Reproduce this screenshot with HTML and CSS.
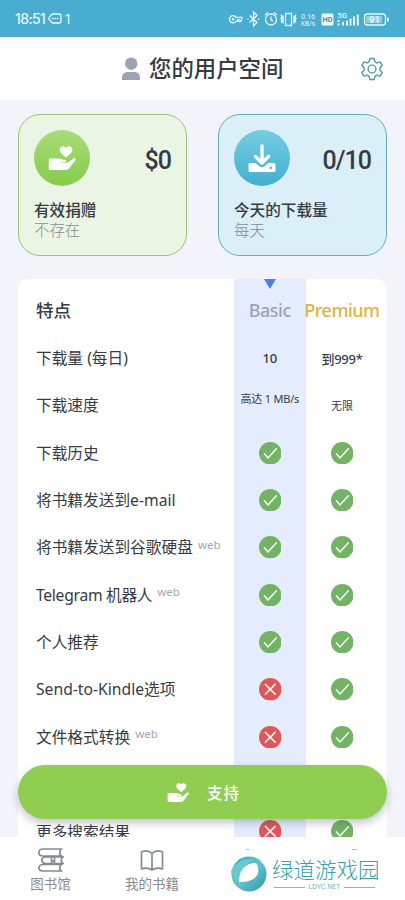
FILE: index.html
```html
<!DOCTYPE html>
<html lang="zh-CN">
<head>
<meta charset="utf-8">
<meta name="viewport" content="width=device-width, initial-scale=1">
<title>您的用户空间</title>
<link rel="stylesheet" href="styles.css">
</head>
<body>
<svg class="defs" width="0" height="0" aria-hidden="true">
  <symbol id="yes" viewBox="0 0 22 22"><circle cx="11" cy="11" r="11" fill="#74b266"/><path d="M5.3 11.6l3.5 4L17 6.7" fill="none" stroke="#f1fff0" stroke-width="1.5" stroke-linecap="round" stroke-linejoin="round"/></symbol>
  <symbol id="no" viewBox="0 0 22 22"><circle cx="11" cy="11" r="11" fill="#dc5859"/><path d="M6.2 6.2l9.600 9.600M15.800 6.200l-9.600 9.600" fill="none" stroke="#fff0f0" stroke-width="1.5" stroke-linecap="round"/></symbol>
  <symbol id="give" viewBox="0 0 28 26"><path d="M18 12.500C14 9.500 11.700 7.500 11.700 4.600C11.700 .8 16.200 0 18 3C19.800 0 24.500 .8 24.500 4.600C24.500 7.500 22 9.500 18 12.500Z"/><path d="M2 13.500H11c3 0 3.500 1.400 6 1.400 1.800 0 1.700 2.500-.2 2.500H12c3 1.300 7 1 9-.6l4.500-3.500c1.500-.9 2.900.5 1.900 1.900l-6 7.800c-1.100 1.400-2.200 2-4 2H2c-.8 0-1.200-.4-1.200-1.200v-9.100c0-.8.400-1.200 1.200-1.200z"/></symbol>
</svg>
<div class="screen">
  <div class="status">
    <span class="clock">18:51</span>
    <svg class="msg" width="14" height="11" viewBox="0 0 14 11"><path d="M4.500 1H11q2 0 2 2v5q0 2-2 2H4.500L1 6.500v-2z"/><path d="M4.500 5.500h.5M7 5.500h.5M9.500 5.500h.5" stroke-width="1.500"/></svg>
    <span class="count">1</span>
    <svg class="tray" width="166" height="20" viewBox="0 0 166 20">
      <g class="line">
        <path d="M8 8.300A3.600 3.600 0 1 0 8 12.300H9.500v-1.600h1.500v1.800h1.500q1.500-2 1.500-4.200z"/><circle cx="5" cy="10.300" r=".7"/>
        <path d="M21.500 6.500l7.500 7L25.500 17V3L29 6.500l-7.500 7M19.500 10h1M30 10h1"/>
        <circle cx="43" cy="10.500" r="5.500"/><path d="M43 7.500v3.500l2 1M37 6l3-2.500M49 6l-3-2.500"/>
        <path d="M57.500 4.500h6v12h-6zM55 6.500v8M66 6.500v8M53 5.500l1 2-1 2 1 2-1 2M68 5.500l-1 2 1 2-1 2 1 2"/>
        <rect x="136.500" y="5" width="21" height="11" rx="3"/><path d="M160 8.500v4" stroke-width="1.800"/>
      </g>
      <text x="73" y="9.500" font-size="7.500" textLength="14" lengthAdjust="spacingAndGlyphs">0.16</text><text x="73" y="16.500" font-size="7.500" textLength="14" lengthAdjust="spacingAndGlyphs">KB/s</text>
      <rect x="93.500" y="4.500" width="12" height="12" rx="1.500" fill="#e7f8ff"/><text x="94.500" y="13.300" font-size="7.500" font-weight="600" textLength="10" lengthAdjust="spacingAndGlyphs" class="dark">HD</text>
      <text x="109.500" y="9" font-size="7.500" font-weight="500" textLength="9.500">5G</text>
      <path d="M110.500 11v2M110.500 14.500v2M115 13v3.500M119 11.500v5M122.500 9.500v7M126 7.500v9M129.800 5.500v11" class="bars"/>
      <rect x="138" y="7" width="16" height="7" rx="1" fill="#8fd0e5"/><text x="141" y="14" font-size="9.500" font-weight="600">91</text>
    </svg>
  </div>

  <header class="header">
    <svg class="person" width="20" height="24" viewBox="0 0 20 24"><circle cx="10.200" cy="6.700" r="6.200"/><path d="M1 23v-2c0-4 2.300-6 6-6h6c3.700 0 6 2 6 6v2z"/></svg>
    <h1>您的用户空间</h1>
    <svg class="gear" width="24" height="24" viewBox="0 0 24 24"><circle cx="12" cy="12" r="3.900"/><path d="M9.900 1.500h4.200l.8 3.200 2 1.200 3.200-1 2.100 3.700-2.300 2.300v2.300l2.300 2.300-2.100 3.600-3.200-.9-2 1.200-.8 3.100H9.900l-.8-3.100-2-1.200-3.200.9-2.100-3.600 2.300-2.300v-2.300L1.800 8.600l2.100-3.700 3.200 1 2-1.200z"/></svg>
  </header>

  <main class="content">
    <section class="cards">
      <article class="card green">
        <div class="card-top"><span class="badge"><svg width="28" height="26"><use href="#give"/></svg></span><strong>$0</strong></div>
        <h2>有效捐赠</h2><p>不存在</p>
      </article>
      <article class="card blue">
        <div class="card-top"><span class="badge"><svg width="28" height="28" viewBox="0 0 28 28"><path d="M14 2v16M7.500 12.500l6.500 6.500 6.500-6.500" fill="none" stroke="#fff" stroke-width="3.400" stroke-linecap="round" stroke-linejoin="round"/><path fill-rule="evenodd" d="M2 19h5.500l4.200 3.500q2.300 1.500 4.600 0L20.500 19H26q1.500 0 1.500 1.500v6Q27.500 28 26 28H2Q.5 28 .5 26.500v-6Q.5 19 2 19zm20.700 3.500a1.300 1.300 0 1 0 .1 0z"/></svg></span><strong>0/10</strong></div>
        <h2>今天的下载量</h2><p>每天</p>
      </article>
    </section>

    <section class="table">
      <div class="row head"><span class="name">特点</span><span class="basic">Basic</span><span class="premium">Premium</span></div>
      <div class="row"><span class="name">下载量 (每日)</span><span class="basic num">10</span><span class="num">到999*</span></div>
      <div class="row"><span class="name">下载速度</span><span class="basic small speed">高达 1 MB/s</span><span class="small">无限</span></div>
      <div class="row"><span class="name">下载历史</span><span class="basic"><svg><use href="#yes"/></svg></span><span><svg><use href="#yes"/></svg></span></div>
      <div class="row"><span class="name">将书籍发送到e-mail</span><span class="basic"><svg><use href="#yes"/></svg></span><span><svg><use href="#yes"/></svg></span></div>
      <div class="row"><span class="name">将书籍发送到谷歌硬盘<small>web</small></span><span class="basic"><svg><use href="#yes"/></svg></span><span><svg><use href="#yes"/></svg></span></div>
      <div class="row"><span class="name"><span class="tight">Telegram 机器人</span><small>web</small></span><span class="basic"><svg><use href="#yes"/></svg></span><span><svg><use href="#yes"/></svg></span></div>
      <div class="row"><span class="name">个人推荐</span><span class="basic"><svg><use href="#yes"/></svg></span><span><svg><use href="#yes"/></svg></span></div>
      <div class="row"><span class="name">Send-to-Kindle选项</span><span class="basic"><svg><use href="#no"/></svg></span><span><svg><use href="#yes"/></svg></span></div>
      <div class="row"><span class="name">文件格式转换<small>web</small></span><span class="basic"><svg><use href="#no"/></svg></span><span><svg><use href="#yes"/></svg></span></div>
      <div class="row"><span class="name"></span><span class="basic"></span><span></span></div>
      <div class="row"><span class="name">更多搜索结果</span><span class="basic"><svg><use href="#no"/></svg></span><span><svg><use href="#yes"/></svg></span></div>
    </section>
  </main>

  <button class="support"><svg width="22" height="21" viewBox="0 0 28 26"><use href="#give"/></svg><span>支持</span></button>

  <nav class="nav">
    <a class="tab library"><svg width="28" height="26" viewBox="0 0 28 25"><path d="M25.500 1.500H6C.5 1.500.5 8.500 6 8.500h19.500M24 1.500q-2.500 3.500 0 7M27 9.500H9C3.500 9.500 3.500 16 9 16h18M25.500 9.500q-2.500 3.200 0 6.500M25.500 17H6C.5 17 .5 23.500 6 23.500h19.500M24 17q-2.500 3.200 0 6.500"/><path d="M14.500 10v4.500l1.500-1 1.500 1V10"/></svg><span>图书馆</span></a>
    <a class="tab books"><svg width="24" height="26" viewBox="0 -2.500 24 26"><path d="M12 4Q7.500-.5 1.500 2.500v17q6-2 10.500 1 4.500-3 10.500-1v-17Q16.500-.5 12 4zM12 4v16.500"/></svg><span>我的书籍</span></a>
    <div class="brand">
      <svg width="36" height="36" viewBox="0 0 36 36"><defs><linearGradient id="swirl" x1="0" y1="0" x2="1" y2="1"><stop offset="0" stop-color="#3caab3"/><stop offset=".5" stop-color="#62c4cb"/><stop offset="1" stop-color="#2d98a3"/></linearGradient></defs><circle cx="18" cy="18" r="17.500" fill="url(#swirl)"/><path d="M0 15C5 5 16 1 24 4 13 7 10 14 8 27 3 24 1 20 0 15z" fill="#6bc8ce"/><path d="M8 26C8 14 14 7 25 7c5 8 3 19-17 19z" fill="#fff"/></svg>
      <div class="brand-text"><span class="brand-name">绿道游戏园</span><span class="brand-url">LDYC.NET</span></div>
    </div>
    <i class="speck"></i><i class="speck right"></i>
  </nav>
</div>
</body>
</html>
```
FILE: styles.css
```css
* { box-sizing: border-box; }
body { margin: 0; font-family: "Noto Sans", "Noto Sans CJK SC", sans-serif; color: #363b44; }
h1, h2, p { margin: 0; }
.defs { position: absolute; }
.screen { position: relative; width: 405px; height: 900px; display: flex; flex-direction: column; overflow: hidden; background: #f3f4f9; }

.status { height: 37px; flex: none; display: flex; align-items: center; padding: 0 15px; background: #48adcf; color: #e7f8ff; }
.clock { font: 500 14px Inter, sans-serif; width: 33px; letter-spacing: -.6px; }
.msg { fill: none; stroke: #e7f8ff; stroke-width: 1.3; stroke-linecap: round; }
.count { font: 13px Inter, sans-serif; margin-left: 3px; }
.tray { margin-left: auto; margin-right: -4px; fill: #e7f8ff; font-family: Roboto, sans-serif; overflow: visible; }
.tray .line { fill: none; stroke: #e7f8ff; stroke-width: 1.3; }
.tray .bars { stroke: #e7f8ff; stroke-width: 2; }
.tray .dark { fill: #378fae; }

.header { height: 63px; flex: none; display: flex; align-items: center; padding: 0 21px 0 121px; background: #fff; }
.person { fill: #9da1b4; margin-top: 1px; }
.header h1 { margin-left: 8px; padding-top: 1px; font-size: 22.400px; line-height: 32px; font-weight: 500; }
.gear { margin-left: auto; fill: none; stroke: #4b9eb0; stroke-width: 1.4; stroke-linejoin: round; }

.content { flex: 1; min-height: 0; padding: 14px 18px 0; overflow: hidden; }
.cards { display: grid; grid-template-columns: 169px 169px; justify-content: space-between; height: 142px; }
.card { border: 1px solid; border-radius: 22px; padding: 15px; }
.green { background: #ebf5e4; border-color: #9fc17f; }
.blue { background: #daeff7; border-color: #65aeb9; }
.card-top { display: flex; align-items: center; justify-content: space-between; height: 56px; }
.card-top strong { font: 500 25px/56px Roboto, sans-serif; letter-spacing: -1px; padding-top: 5px; }
.badge { width: 56px; height: 56px; border-radius: 50%; display: grid; place-items: center; fill: #fff; }
.green .badge { background: linear-gradient(#a9dc77, #85cc4c); }
.blue .badge { background: linear-gradient(#75cce2, #43afd0); }
.card h2 { margin-top: 13px; font-size: 15.600px; line-height: 22px; font-weight: 500; }
.card p { font-size: 15.400px; line-height: 19px; font-weight: 300; color: #858c94; }

.table { margin-top: 23px; border-radius: 10px 10px 0 0; background: #fff; overflow: hidden; }
.row { display: grid; grid-template-columns: 215.500px 72.500px 72px; height: 47.350px; }
.row > span { display: flex; align-items: center; justify-content: center; white-space: nowrap; }
.row > .name { justify-content: flex-start; padding-left: 18px; padding-bottom: 1px; font-size: 15.700px; }
.row .basic { background: #e5ecfe; padding-right: 0; }
.row svg { width: 22.500px; height: 22.500px; }
.row small { font-size: 11.500px; color: #a3a6ac; margin: -5px 0 0 5px; }
.tight { letter-spacing: -.3px; }
.row.head { height: 55.400px; font-size: 18px; }
.row.head > span { padding-top: 6px; }
.row.head > .name { font-size: 17.500px; font-weight: 500; padding-bottom: 0; }
.head .basic { position: relative; color: #9da2b4; }
.head .basic::before { content: ""; position: absolute; top: 0; left: 30px; border: 6px solid transparent; border-top: 10px solid #507de1; border-bottom: 0; }
.head .basic, .row.head .premium { font-weight: 500; letter-spacing: -.5px; }
.row.head .premium { position: relative; color: #dfb33d; }
.row .num { font-size: 13px; font-weight: 500; letter-spacing: -.3px; }
.row .small { font-size: 11px; padding-bottom: 1px; }
.row .speed { padding-bottom: 14px; letter-spacing: -.2px; }

.support { position: absolute; left: 18px; top: 765px; width: 369px; height: 54px; border: 0; border-radius: 27px; background: #8fce50; color: #fff; display: flex; align-items: center; justify-content: center; gap: 18px; padding: 0 0 0 2px; box-shadow: 0 4px 8px rgba(60, 60, 80, .3); font: 500 15.500px "Noto Sans", "Noto Sans CJK SC", sans-serif; letter-spacing: 1px; }
.support svg { fill: #fff; }

.nav { position: relative; height: 63px; flex: none; background: #fff; display: flex; align-items: flex-start; padding-top: 10px; color: #898c92; }
.tab { display: flex; flex-direction: column; align-items: center; font-size: 13.500px; line-height: 22px; }
.tab svg { fill: none; stroke: #858a92; stroke-width: 1.7; stroke-linejoin: round; }
.library { width: 101px; }
.books { width: 102px; }
.brand { display: flex; align-items: center; gap: 5px; margin: 9px 0 0 28px; }
.brand-text { display: flex; flex-direction: column; color: #36a1ac; }
.brand-name { font-size: 21.500px; line-height: 26px; font-weight: 300; }
.brand-url { display: flex; align-items: center; justify-content: space-between; gap: 2px; font: 6.500px Inter, sans-serif; width: 101px; margin-left: 2px; color: #6fb2bb; }
.brand-url::before, .brand-url::after { content: ""; width: 31px; height: 1px; background: #7bbfc6; }
.speck { position: absolute; left: 246px; top: 12px; width: 3px; height: 1px; background: #8dc5cf; }
.speck.right { left: 352px; width: 5px; }
```
